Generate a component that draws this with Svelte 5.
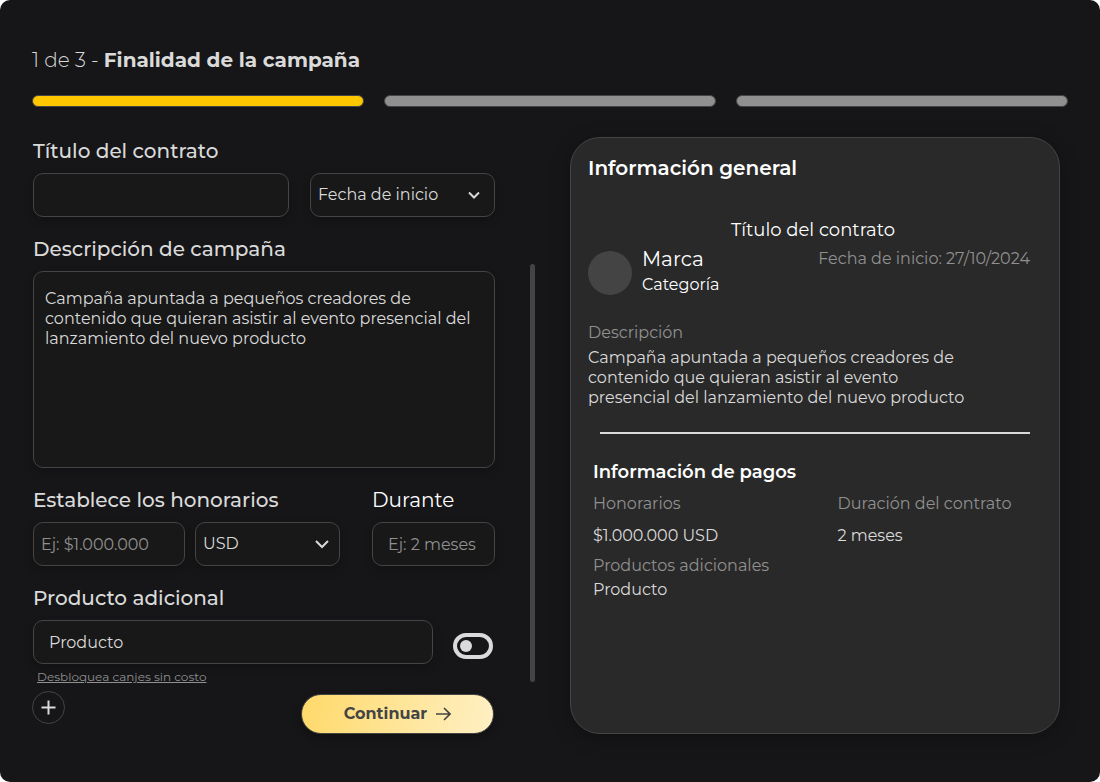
<script>
	const totalSteps = 3;
	let step = 1;

	let title = '';
	let startDate = '';
	let description = 'Campaña apuntada a pequeños creadores de contenido que quieran asistir al evento presencial del lanzamiento del nuevo producto';
	let fee = '';
	let currency = 'USD';
	let duration = '';
	let products = ['Producto'];
	let exchange = false;

	function addProduct() {
		products = [...products, ''];
	}

	function nextStep() {
		if (step < totalSteps) step++;
	}
</script>

<main>
    <h1>{step} de {totalSteps} - <b>Finalidad de la campaña</b></h1>

    <div class="progress">
        {#each Array(totalSteps) as _, i}
            <span class="bar" class:done={i < step}></span>
        {/each}
    </div>

    <div class="content">
        <form on:submit|preventDefault={nextStep}>
            <div class="row rowTitle">
                <div class="field">
                    <label for="title">Título del contrato</label>
                    <input id="title" type="text" bind:value={title}>
                </div>
                <div class="selectBox">
                    <select aria-label="Fecha de inicio" bind:value={startDate}>
                        <option value="">Fecha de inicio</option>
                        <option value="2024-10-27">27/10/2024</option>
                    </select>
                    <svg class="chevron" width="14" height="14" viewBox="0 0 14 14">
                        <path d="M2 4.5 L7 9.5 L12 4.5"/>
                    </svg>
                </div>
            </div>

            <div class="field">
                <label for="description">Descripción de campaña</label>
                <textarea id="description" bind:value={description}></textarea>
            </div>

            <div class="row rowFee">
                <div class="field">
                    <label for="fee">Establece los honorarios</label>
                    <input id="fee" type="text" placeholder="Ej: $1.000.000" bind:value={fee}>
                </div>
                <div class="selectBox">
                    <select aria-label="Moneda" bind:value={currency}>
                        <option>USD</option>
                        <option>COP</option>
                    </select>
                    <svg class="chevron" width="16" height="16" viewBox="0 0 16 16">
                        <path d="M2 4 L8 10 L14 4"/>
                    </svg>
                </div>
                <div class="field during">
                    <label for="duration">Durante</label>
                    <input id="duration" type="text" placeholder="Ej: 2 meses" bind:value={duration}>
                </div>
            </div>

            <div class="field">
                <label for="product0">Producto adicional</label>
                {#each products as product, i}
                    <div class="product">
                        <input id="product{i}" type="text" aria-label="Producto adicional" bind:value={product}>
                        {#if i === 0}
                            <input type="checkbox" class="toggle" aria-label="Canje" bind:checked={exchange}>
                        {/if}
                    </div>
                {/each}
            </div>
            <a class="hint" href="#canjes">Desbloquea canjes sin costo</a>

            <div class="actions">
                <button type="button" class="add" aria-label="Agregar producto" on:click={addProduct}>
                    <svg width="15" height="15" viewBox="0 0 15 15">
                        <path d="M7.5 0.5 V14.5 M0.5 7.5 H14.5"/>
                    </svg>
                </button>
                <button type="submit" class="next">
                    Continuar
                    <svg width="16" height="14" viewBox="0 0 16 14">
                        <path d="M1 7 H15 M9 1 L15 7 L9 13"/>
                    </svg>
                </button>
            </div>
        </form>

        <div class="scroll"></div>

        <section class="card">
            <h2>Información general</h2>
            <p class="cardTitle">{title || 'Título del contrato'}</p>
            <div class="brand">
                <span class="avatar"></span>
                <div>
                    <p class="name">Marca</p>
                    <p class="category">Categoría</p>
                </div>
                <p class="date">Fecha de inicio: 27/10/2024</p>
            </div>
            <p class="caption">Descripción</p>
            <p class="text">{description}</p>
            <hr>
            <div class="payments">
                <h3>Información de pagos</h3>
                <dl class="columns">
                    <div>
                        <dt>Honorarios</dt>
                        <dd>${fee || '1.000.000'} {currency}</dd>
                    </div>
                    <div>
                        <dt>Duración del contrato</dt>
                        <dd>{duration || '2 meses'}</dd>
                    </div>
                </dl>
                <dl class="extras">
                    <dt>Productos adicionales</dt>
                    {#each products as product}
                        <dd>{product}</dd>
                    {/each}
                </dl>
            </div>
        </section>
    </div>
</main>

<style>
    :global(body) {
        background: #fff;
    }

    main {
        box-sizing: border-box;
        min-height: 100vh;
        padding: 46px 32px 48px;
        border-radius: 10px;
        background: #161618;
        color: #dadada;
        font-family: Montserrat, Inter, sans-serif;
        font-size: 16px;
        font-weight: 400;
        line-height: 20px;
    }

    h1, h2, h3, p, dl, dd {
        margin: 0;
    }

    h1 {
        font-size: 20px;
        font-weight: 300;
        line-height: 28px;
    }

    h1 b {
        font-weight: 700;
    }

    .progress {
        display: grid;
        grid-template-columns: repeat(3, 1fr);
        gap: 20px;
        margin: 21px 0 30px;
    }

    .bar {
        box-sizing: border-box;
        height: 12px;
        border: 1px solid #444;
        border-radius: 6px;
        background: #909090;
    }

    .bar.done {
        background: #ffc700;
    }

    .content {
        display: grid;
        grid-template-columns: minmax(0, 462fr) 5px minmax(0, 490fr);
        gap: 35px;
        padding: 0 8px 0 1px;
    }

    form {
        display: flex;
        flex-direction: column;
        gap: 18px;
    }

    .row {
        display: grid;
        align-items: end;
    }

    .rowTitle {
        grid-template-columns: minmax(0, 256fr) minmax(0, 185fr);
        gap: 21px;
    }

    .rowFee {
        grid-template-columns: minmax(0, 152fr) minmax(0, 145fr) minmax(0, 145fr);
        gap: 10px;
    }

    .during {
        padding-left: 22px;
    }

    .field {
        display: flex;
        flex-direction: column;
        gap: 8px;
    }

    label {
        font-size: 20px;
        font-weight: 500;
        line-height: 28px;
        white-space: nowrap;
    }

    .during label {
        color: #fff;
        font-weight: 400;
    }

    input[type="text"], select, textarea {
        box-sizing: border-box;
        width: 100%;
        height: 44px;
        padding: 0 7px;
        border: 1px solid #444;
        border-radius: 10px;
        background: #181818;
        box-shadow: 0 4px 10px rgba(0, 0, 0, .2);
        color: #dadada;
        font: inherit;
        outline: none;
    }

    input::placeholder {
        color: #909090;
        opacity: 1;
    }

    .during input[type="text"] {
        padding-left: 15px;
    }

    textarea {
        display: block;
        height: 197px;
        padding: 17px 11px;
        resize: none;
    }

    .selectBox {
        position: relative;
    }

    select {
        appearance: none;
    }

    .chevron {
        position: absolute;
        top: 15px;
        right: 14px;
        pointer-events: none;
    }

    .rowFee .chevron {
        right: 10px;
    }

    svg {
        fill: none;
        stroke: #dadada;
        stroke-width: 2;
    }

    .product {
        display: grid;
        grid-template-columns: 400fr 42fr;
        gap: 20px;
        align-items: end;
    }

    .product input[type="text"] {
        padding: 0 15px;
    }

    .toggle {
        display: flex;
        align-items: center;
        appearance: none;
        box-sizing: border-box;
        width: 40px;
        height: 26px;
        margin: 0 0 5px;
        padding: 0 3px;
        border: 4px solid #dadada;
        border-radius: 13px;
    }

    .toggle::before {
        content: '';
        width: 12px;
        height: 12px;
        border-radius: 50%;
        background: #dadada;
    }

    .toggle:checked {
        justify-content: flex-end;
        border-color: #ffc700;
    }

    .hint {
        align-self: flex-start;
        margin: -14px 0 -13px 4px;
        color: #909090;
        font-size: 12px;
        line-height: 18px;
    }

    .actions {
        display: flex;
        justify-content: space-between;
        align-items: flex-start;
        margin: 0 1px 0 -1px;
    }

    button {
        display: flex;
        align-items: center;
        justify-content: center;
        padding: 0;
        font: inherit;
        cursor: pointer;
    }

    .add {
        width: 33px;
        height: 33px;
        border: 1px solid #444;
        border-radius: 50%;
        background: #161618;
    }

    .next {
        gap: 8px;
        width: 193px;
        height: 40px;
        margin-top: 3px;
        border: 1px solid #444;
        border-radius: 20px;
        background: linear-gradient(100deg, #ffd96a, #fff0c4);
        box-shadow: 0 4px 8px rgba(0, 0, 0, .25);
        color: #444;
        font-weight: 700;
    }

    .next svg {
        stroke: #444;
        stroke-width: 1.6;
    }

    .scroll {
        height: 418px;
        margin-top: 127px;
        border-radius: 3px;
        background: #444;
    }

    .card {
        box-sizing: border-box;
        padding: 16px 29px 16px 17px;
        border: 1px solid #444;
        border-radius: 30px;
        background: #292929;
        box-shadow: 0 4px 20px rgba(0, 0, 0, .25);
    }

    h2 {
        color: #fff;
        font-size: 20px;
        font-weight: 600;
        line-height: 28px;
    }

    .cardTitle {
        margin: 38px 0 9px;
        padding-left: 8px;
        color: #fff;
        font-size: 18px;
        text-align: center;
    }

    .brand {
        display: flex;
        gap: 10px;
    }

    .avatar {
        width: 44px;
        height: 44px;
        margin-top: 2px;
        border-radius: 50%;
        background: #444;
    }

    .name {
        color: #fff;
        font-size: 20px;
    }

    .category {
        margin-top: 6px;
        color: #fff;
    }

    .date {
        margin-left: auto;
        color: #909090;
    }

    .caption {
        margin: 28px 0 5px;
        color: #909090;
    }

    .text {
        max-width: 390px;
    }

    hr {
        height: 2px;
        margin: 24px 0 28px 12px;
        border: 0;
        background: #dadada;
    }

    .payments {
        padding-left: 5px;
    }

    h3 {
        color: #fff;
        font-size: 18px;
        font-weight: 600;
    }

    dt {
        color: #909090;
    }

    .columns {
        display: grid;
        grid-template-columns: 245fr 193fr;
        margin: 12px 0 10px;
    }

    .columns dd {
        margin-top: 12px;
    }

    .extras dd {
        margin-top: 4px;
    }
</style>
